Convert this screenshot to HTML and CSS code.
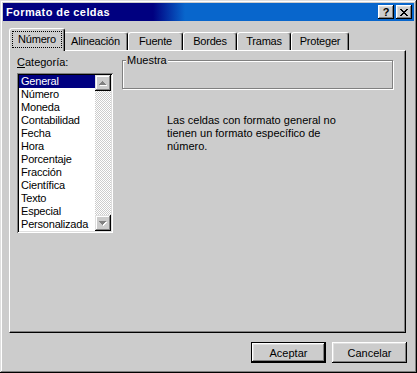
FILE: index.html
```html
<!DOCTYPE html>
<html lang="es">
<head>
    <meta charset="UTF-8">
    <title>Formato de celdas</title>
    <link rel="stylesheet" href="styles.css">
</head>
<body>

    <div class="window">
        <div class="titlebar">
            <span class="title">Formato de celdas</span>
            <div class="title-buttons">
                <button class="tb-btn help">?</button>
                <button class="tb-btn close">
                    <svg width="8" height="7" viewBox="0 0 8 7" shape-rendering="crispEdges">
                        <path d="M0 0h2v1h-2z M6 0h2v1h-2z M1 1h2v1h-2z M5 1h2v1h-2z M2 2h4v1h-4z M3 3h2v1h-2z M2 4h4v1h-4z M1 5h2v1h-2z M5 5h2v1h-2z M0 6h2v1h-2z M6 6h2v1h-2z" fill="#000"/>
                    </svg>
                </button>
            </div>
        </div>

        <div class="dialog">
            <div class="tabs">
                <div class="tab tab-num active"><span class="focus">Número</span></div>
                <div class="tab tab-ali">Alineación</div>
                <div class="tab tab-fue">Fuente</div>
                <div class="tab tab-bor">Bordes</div>
                <div class="tab tab-tra">Tramas</div>
                <div class="tab tab-pro">Proteger</div>
            </div>

            <div class="panel">
                <div class="category">
                    <div class="caption"><u>C</u>ategoría:</div>
                    <div class="listbox">
                        <ul class="items">
                            <li class="selected">General</li>
                            <li>Número</li>
                            <li>Moneda</li>
                            <li>Contabilidad</li>
                            <li>Fecha</li>
                            <li>Hora</li>
                            <li>Porcentaje</li>
                            <li>Fracción</li>
                            <li>Científica</li>
                            <li>Texto</li>
                            <li>Especial</li>
                            <li>Personalizada</li>
                        </ul>
                        <div class="scrollbar">
                            <div class="sb-btn">
                                <svg width="8" height="5" viewBox="0 0 8 5" shape-rendering="crispEdges">
                                    <path d="M4 1h1v1h-1z M3 2h3v1h-3z M2 3h5v1h-5z M1 4h7v1h-7z" fill="#fff"/>
                                    <path d="M3 0h1v1h-1z M2 1h3v1h-3z M1 2h5v1h-5z M0 3h7v1h-7z" fill="#808080"/>
                                </svg>
                            </div>
                            <div class="sb-track"></div>
                            <div class="sb-btn">
                                <svg width="8" height="5" viewBox="0 0 8 5" shape-rendering="crispEdges">
                                    <path d="M1 1h7v1h-7z M2 2h5v1h-5z M3 3h3v1h-3z M4 4h1v1h-1z" fill="#fff"/>
                                    <path d="M0 0h7v1h-7z M1 1h5v1h-5z M2 2h3v1h-3z M3 3h1v1h-1z" fill="#808080"/>
                                </svg>
                            </div>
                        </div>
                    </div>
                </div>

                <div class="details">
                    <fieldset class="sample">
                        <legend>Muestra</legend>
                        <div class="sample-body"></div>
                    </fieldset>
                    <p class="desc">Las celdas con formato general no tienen un formato específico de número.</p>
                </div>
            </div>

            <div class="actions">
                <button class="btn default">Aceptar</button>
                <button class="btn">Cancelar</button>
            </div>
        </div>
    </div>

</body>
</html>
```

FILE: styles.css
```css
body {
    margin: 0;
    padding: 0;
    background-color: #cccccc;
    font-family: "Liberation Sans", Arial, sans-serif;
    font-size: 11px;
    color: #000;
}

.window {
    width: 417px;
    height: 373px;
    box-sizing: border-box;
    padding: 3px;
    background-color: #cccccc;
    box-shadow: inset -1px -1px #000, inset 1px 1px #dfdfdf,
                inset -2px -2px #808080, inset 2px 2px #fff;
}

/* title bar */
.titlebar {
    height: 18px;
    display: flex;
    align-items: center;
    justify-content: space-between;
    padding: 0 2px 0 3px;
    background: linear-gradient(90deg, #000080 0, #000080 150px, #0866cc 182px, #0866cc 100%);
}

.title {
    color: #fff;
    font-weight: bold;
    font-size: 11px;
    letter-spacing: 0.4px;
}

.title-buttons {
    display: flex;
    gap: 2px;
}

.tb-btn {
    width: 16px;
    height: 14px;
    padding: 0;
    border: none;
    background-color: #cccccc;
    box-shadow: inset -1px -1px #000, inset 1px 1px #fff,
                inset -2px -2px #808080, inset 2px 2px #dfdfdf;
    font-family: "Liberation Sans", Arial, sans-serif;
    font-weight: bold;
    font-size: 11px;
    line-height: 14px;
    display: flex;
    align-items: center;
    justify-content: center;
}

/* dialog body */
.dialog {
    padding: 0 8px 0 6px;
}

.tabs {
    display: flex;
    align-items: flex-end;
    height: 22px;
    margin-top: 7px;
    padding-left: 2px;
    position: relative;
    z-index: 1;
}

.tab {
    height: 18px;
    box-sizing: border-box;
    border-top: 1px solid #fff;
    border-left: 1px solid #fff;
    border-right: 1px solid #000;
    box-shadow: inset -1px 0 #808080;
    border-radius: 3px 3px 0 0;
    background-color: #cccccc;
    text-align: center;
    line-height: 16px;
    letter-spacing: -0.2px;
}

.tab-num { width: 52px; }
.tab-ali { width: 65px; }
.tab-fue { width: 55px; }
.tab-bor { width: 54px; }
.tab-tra { width: 54px; }
.tab-pro { width: 58px; }

.tab.active {
    width: 56px;
    height: 23px;
    margin: 0 -2px -1px -2px;
    padding-top: 2px;
    position: relative;
    z-index: 2;
}

.focus {
    display: inline-block;
    padding: 1px 5px;
    line-height: 13px;
    border: 1px dotted #000;
}

.panel {
    display: flex;
    height: 283px;
    box-sizing: border-box;
    padding: 4px 0 0 7px;
    border: 1px solid;
    border-color: #fff #000 #000 #fff;
    box-shadow: inset -1px -1px #808080;
}

.caption {
    margin-top: 1px;
    line-height: 13px;
}

.listbox {
    display: flex;
    width: 96px;
    height: 160px;
    box-sizing: border-box;
    margin-top: 4px;
    padding: 2px;
    background-color: #fff;
    box-shadow: inset 1px 1px #808080, inset -1px -1px #fff,
                inset 2px 2px #000, inset -2px -2px #dfdfdf;
}

.items {
    list-style: none;
    margin: 0;
    padding: 0;
    flex: 1;
}

.items li {
    height: 13px;
    line-height: 13px;
    padding-left: 2px;
    letter-spacing: -0.2px;
    white-space: nowrap;
}

.items li.selected {
    background-color: #000080;
    color: #fff;
}

.scrollbar {
    width: 16px;
    display: flex;
    flex-direction: column;
}

.sb-btn {
    width: 16px;
    height: 16px;
    background-color: #cccccc;
    box-shadow: inset -1px -1px #000, inset 1px 1px #dfdfdf,
                inset -2px -2px #808080, inset 2px 2px #fff;
    display: flex;
    align-items: center;
    justify-content: center;
}

.sb-track {
    flex: 1;
    background-image: conic-gradient(#fff 25%, #cccccc 0 50%, #fff 0 75%, #cccccc 0);
    background-size: 2px 2px;
}

.details {
    margin-left: 9px;
}

.sample {
    width: 271px;
    box-sizing: border-box;
    margin: 0;
    padding: 0;
    border: 1px solid #808080;
    box-shadow: inset 1px 1px #fff, 1px 1px #fff;
}

.sample legend {
    margin-left: 3px;
    padding: 0 1px;
    line-height: 11px;
    background-color: #cccccc;
}

.sample-body {
    height: 22px;
}

.desc {
    width: 175px;
    margin: 25px 0 0 45px;
    line-height: 13px;
}

.actions {
    display: flex;
    justify-content: flex-end;
    gap: 6px;
    margin-top: 9px;
    margin-right: -1px;
}

.btn {
    width: 75px;
    height: 21px;
    padding: 0;
    border: none;
    background-color: #cccccc;
    font-family: "Liberation Sans", Arial, sans-serif;
    font-size: 11px;
    color: #000;
    box-shadow: inset -1px -1px #000, inset 1px 1px #fff,
                inset -2px -2px #808080, inset 2px 2px #dfdfdf;
}

.btn.default {
    border: 1px solid #000;
}
```
